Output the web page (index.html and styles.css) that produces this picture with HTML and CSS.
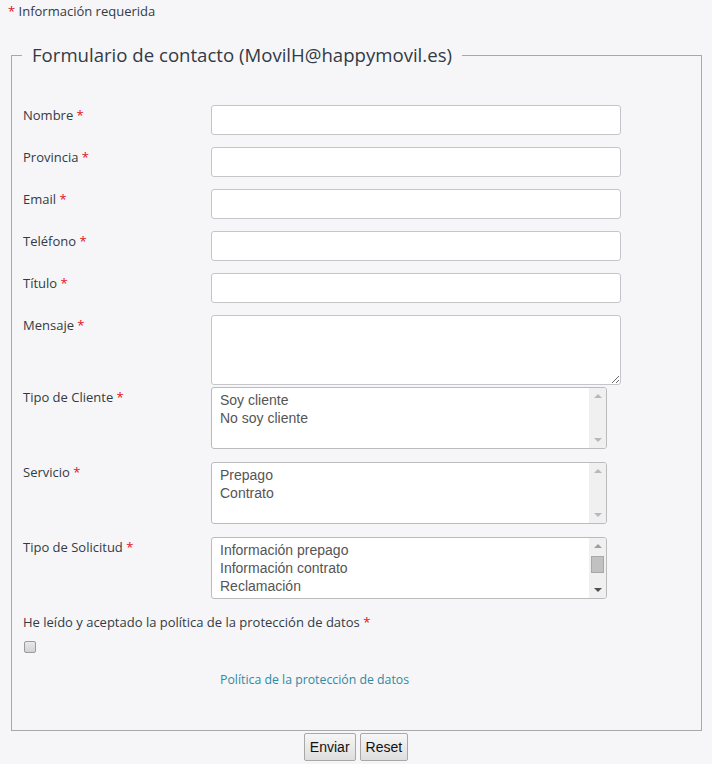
FILE: index.html
```html
<!DOCTYPE html>
<html lang="es">
<head>
<meta charset="utf-8">
<title>Formulario de contacto</title>
<link rel="stylesheet" href="styles.css">
</head>
<body>
<p class="required-note"><span class="req">*</span> Información requerida</p>
<form class="contact">
  <fieldset class="box">
    <legend class="box-title">Formulario de contacto (MovilH@happymovil.es)</legend>
    <div class="rows">
      <div class="row"><label class="lbl">Nombre <span class="req">*</span></label><input class="field" type="text"></div>
      <div class="row"><label class="lbl">Provincia <span class="req">*</span></label><input class="field" type="text"></div>
      <div class="row"><label class="lbl">Email <span class="req">*</span></label><input class="field" type="text"></div>
      <div class="row"><label class="lbl">Teléfono <span class="req">*</span></label><input class="field" type="text"></div>
      <div class="row"><label class="lbl">Título <span class="req">*</span></label><input class="field" type="text"></div>
      <div class="row row-tight"><label class="lbl">Mensaje <span class="req">*</span></label><textarea class="field area"></textarea></div>
      <div class="row row-list"><label class="lbl">Tipo de Cliente <span class="req">*</span></label>
        <div class="listbox" role="listbox">
          <div class="opts"><div>Soy cliente</div><div>No soy cliente</div></div>
          <div class="sbar"><span class="arr up"></span><span class="track"></span><span class="arr down"></span></div>
        </div>
      </div>
      <div class="row row-list"><label class="lbl">Servicio <span class="req">*</span></label>
        <div class="listbox" role="listbox">
          <div class="opts"><div>Prepago</div><div>Contrato</div></div>
          <div class="sbar"><span class="arr up"></span><span class="track"></span><span class="arr down"></span></div>
        </div>
      </div>
      <div class="row row-list"><label class="lbl">Tipo de Solicitud <span class="req">*</span></label>
        <div class="listbox" role="listbox">
          <div class="opts"><div>Información prepago</div><div>Información contrato</div><div>Reclamación</div><div>Cambio de forma de la contratación</div></div>
          <div class="sbar active"><span class="arr up"></span><span class="track"><span class="thumb"></span></span><span class="arr down"></span></div>
        </div>
      </div>
    </div>
    <p class="consent">He leído y aceptado la política de la protección de datos <span class="req">*</span></p>
    <div class="check-wrap"><input type="checkbox" class="check"></div>
    <p class="policy"><a href="#" class="policy-link">Política de la protección de datos</a></p>
  </fieldset>
  <div class="actions">
    <button type="submit" class="btn">Enviar</button>
    <button type="reset" class="btn">Reset</button>
  </div>
</form>
</body>
</html>
```
FILE: styles.css
```css
html, body {
  margin: 0;
  background: #f6f6f8;
}
body {
  padding: 2px 8px 0;
  font-family: "Open Sans", "Noto Sans", sans-serif;
  font-size: 13px;
  color: #333a44;
}
.req { color: #e0101c; }
.required-note {
  margin: 0;
  line-height: 18px;
}
.contact { margin: 0; }
.box {
  margin: 22px 2px 0 3px;
  padding: 0 11px 40px;
  border: 1px solid #a9a9a9;
  border-radius: 0;
}
.box-title {
  padding: 0 10px;
  margin-left: -1px;
  font-size: 18.6px;
  line-height: 26px;
  color: #333a44;
}
.rows {
  display: flex;
  flex-direction: column;
  padding-top: 37px;
}
.row {
  display: flex;
  align-items: flex-start;
  margin-bottom: 12px;
}
.row-tight { margin-bottom: 2px; }
.row-list { margin-bottom: 13px; }
.lbl {
  width: 188px;
  flex: none;
  line-height: 20px;
}
.field {
  box-sizing: border-box;
  width: 410px;
  height: 30px;
  margin: 0;
  border: 1px solid #c4c6c9;
  border-radius: 3px;
  background: #fff;
  font-family: Arial, "Liberation Sans", sans-serif;
  font-size: 14px;
}
.area {
  height: 70px;
  resize: vertical;
}
.listbox {
  box-sizing: border-box;
  width: 396px;
  height: 62px;
  border: 1px solid #b9bbbe;
  border-radius: 3px;
  background: #fff;
  display: flex;
  overflow: hidden;
}
.opts {
  flex: 1;
  padding: 3px 8px;
  font-family: Arial, "Liberation Sans", sans-serif;
  font-size: 14px;
  line-height: 18px;
  color: #555;
  overflow: hidden;
  white-space: nowrap;
}
.sbar {
  width: 17px;
  flex: none;
  background: #f0f0f0;
  display: flex;
  flex-direction: column;
  align-items: center;
}
.arr {
  width: 0;
  height: 0;
  border-left: 4px solid transparent;
  border-right: 4px solid transparent;
  margin: 5px 0;
}
.arr.up { border-bottom: 4px solid #b8b8b8; margin-top: 6px; }
.arr.down { border-top: 4px solid #b8b8b8; margin-bottom: 6px; }
.sbar.active .arr.up { border-bottom-color: #a0a0a0; }
.sbar.active .arr.down { border-top-color: #505050; }
.track {
  flex: 1;
  width: 100%;
  display: flex;
  justify-content: center;
}
.thumb {
  width: 13px;
  height: 17px;
  margin-top: 3px;
  background: #c1c1c1;
  border: 1px solid #a8a8a8;
  box-sizing: border-box;
}
.consent {
  margin: 0;
  line-height: 20px;
}
.check-wrap {
  height: 17px;
  padding-top: 9px;
}
.check {
  -webkit-appearance: none;
  appearance: none;
  display: block;
  margin: 0 0 0 1px;
  width: 12px;
  height: 12px;
  border: 1px solid #9a9a9a;
  border-radius: 2px;
  background: linear-gradient(#e9e9e9, #d2d2d2);
}
.policy {
  margin: 12px 0 0 197px;
  line-height: 20px;
  font-size: 12.3px;
}
.policy-link {
  color: #2f8aa3;
  text-decoration: none;
}
.actions {
  display: flex;
  justify-content: center;
  gap: 4px;
  margin-top: 2px;
  margin-left: -8px;
  margin-right: -8px;
}
.btn {
  box-sizing: border-box;
  height: 28px;
  padding: 0 5px;
  border: 1px solid #a8a8a8;
  border-radius: 2px;
  background: linear-gradient(#f6f6f6, #dedede);
  font-family: Arial, "Liberation Sans", sans-serif;
  font-size: 14px;
  color: #111;
}
```
